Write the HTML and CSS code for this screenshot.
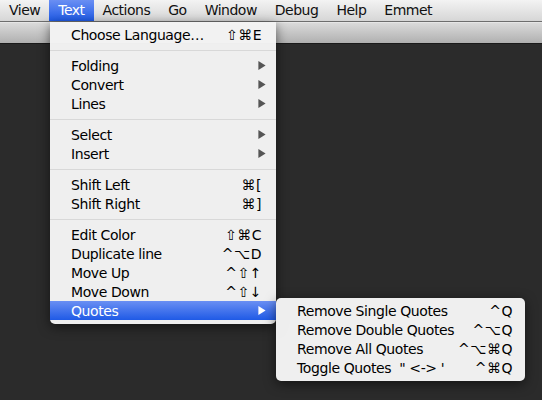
FILE: index.html
```html
<!DOCTYPE html>
<html>
<head>
<meta charset="utf-8">
<link rel="stylesheet" href="styles.css">
</head>
<body>
<div class="screen">
  <div class="menubar">
    <span class="mb-item">View</span>
    <span class="mb-item active">Text</span>
    <span class="mb-item">Actions</span>
    <span class="mb-item">Go</span>
    <span class="mb-item">Window</span>
    <span class="mb-item">Debug</span>
    <span class="mb-item">Help</span>
    <span class="mb-item">Emmet</span>
  </div>
  <div class="toolbar"></div>
  <div class="workspace"></div>

  <div class="menu main-menu">
    <div class="item"><span class="label">Choose Language…</span><span class="key">⇧⌘E</span></div>
    <div class="sep"></div>
    <div class="item"><span class="label">Folding</span><svg class="arrow" viewBox="0 0 8 10"><polygon points="0,0 8,5 0,10"/></svg></div>
    <div class="item"><span class="label">Convert</span><svg class="arrow" viewBox="0 0 8 10"><polygon points="0,0 8,5 0,10"/></svg></div>
    <div class="item"><span class="label">Lines</span><svg class="arrow" viewBox="0 0 8 10"><polygon points="0,0 8,5 0,10"/></svg></div>
    <div class="sep"></div>
    <div class="item"><span class="label">Select</span><svg class="arrow" viewBox="0 0 8 10"><polygon points="0,0 8,5 0,10"/></svg></div>
    <div class="item"><span class="label">Insert</span><svg class="arrow" viewBox="0 0 8 10"><polygon points="0,0 8,5 0,10"/></svg></div>
    <div class="sep"></div>
    <div class="item"><span class="label">Shift Left</span><span class="key">⌘[</span></div>
    <div class="item"><span class="label">Shift Right</span><span class="key">⌘]</span></div>
    <div class="sep"></div>
    <div class="item"><span class="label">Edit Color</span><span class="key">⇧⌘C</span></div>
    <div class="item"><span class="label">Duplicate line</span><span class="key">^⌥D</span></div>
    <div class="item"><span class="label">Move Up</span><span class="key">^⇧↑</span></div>
    <div class="item"><span class="label">Move Down</span><span class="key">^⇧↓</span></div>
    <div class="item selected"><span class="label">Quotes</span><svg class="arrow" viewBox="0 0 8 10"><polygon points="0,0 8,5 0,10"/></svg></div>
  </div>

  <div class="menu sub-menu">
    <div class="item"><span class="label">Remove Single Quotes</span><span class="key">^Q</span></div>
    <div class="item"><span class="label">Remove Double Quotes</span><span class="key">^⌥Q</span></div>
    <div class="item"><span class="label">Remove All Quotes</span><span class="key">^⌥⌘Q</span></div>
    <div class="item"><span class="label">Toggle Quotes&nbsp; " &lt;-&gt; '</span><span class="key">^⌘Q</span></div>
  </div>
</div>
</body>
</html>
```

FILE: styles.css
```css
* { box-sizing: border-box; }
html, body { margin: 0; padding: 0; }
body {
  width: 542px;
  height: 400px;
  overflow: hidden;
  font-family: "DejaVu Sans", "Liberation Sans", sans-serif;
  font-size: 14px;
  color: #000;
  background: #2b2b2b;
}
.screen {
  position: relative;
  width: 542px;
  height: 400px;
  display: flex;
  flex-direction: column;
}
.menubar {
  height: 22px;
  display: flex;
  align-items: stretch;
  background: linear-gradient(#f3f3f3, #d6d6d6);
  border-bottom: 1px solid #6e6e6e;
}
.mb-item {
  padding: 0 9px;
  line-height: 21px;
  letter-spacing: -0.5px;
  color: #111;
}
.mb-item.active {
  color: #fff;
  background: linear-gradient(#6a8ff3, #1f5ae6);
}
.toolbar {
  height: 22px;
  background: linear-gradient(#dadada, #b0b0b0);
  border-top: 1px solid #e6e6e6;
  border-bottom: 1px solid #1a1a1a;
}
.workspace {
  flex: 1;
  background: #2b2b2b;
}
.menu {
  position: absolute;
  background: rgba(243, 243, 243, 0.98);
  box-shadow: 0 3px 12px rgba(0, 0, 0, 0.55);
}
.main-menu {
  left: 50px;
  top: 22px;
  width: 226px;
  padding: 3px 0 4px;
  border-radius: 0 0 5px 5px;
}
.sub-menu {
  left: 276px;
  top: 298px;
  width: 249px;
  padding: 3px 0 4px;
  border-radius: 5px;
}
.item {
  height: 19px;
  display: flex;
  align-items: center;
  padding: 0 14px 0 21px;
  white-space: nowrap;
}
.sub-menu .item { padding-right: 12px; }
.label {
  flex: 1;
  letter-spacing: -0.4px;
}
.key {
  text-align: right;
  letter-spacing: 0.5px;
}
.arrow {
  width: 8px;
  height: 9px;
  margin-right: -4px;
  fill: #555;
}
.item.selected {
  color: #fff;
  background: linear-gradient(#6a8ff3, #1f5ae6);
}
.item.selected .arrow { fill: #fff; }
.sep {
  height: 12px;
  display: flex;
  align-items: center;
}
.sep::before {
  content: "";
  display: block;
  width: 100%;
  height: 1px;
  background: #d8d8d8;
}
```
